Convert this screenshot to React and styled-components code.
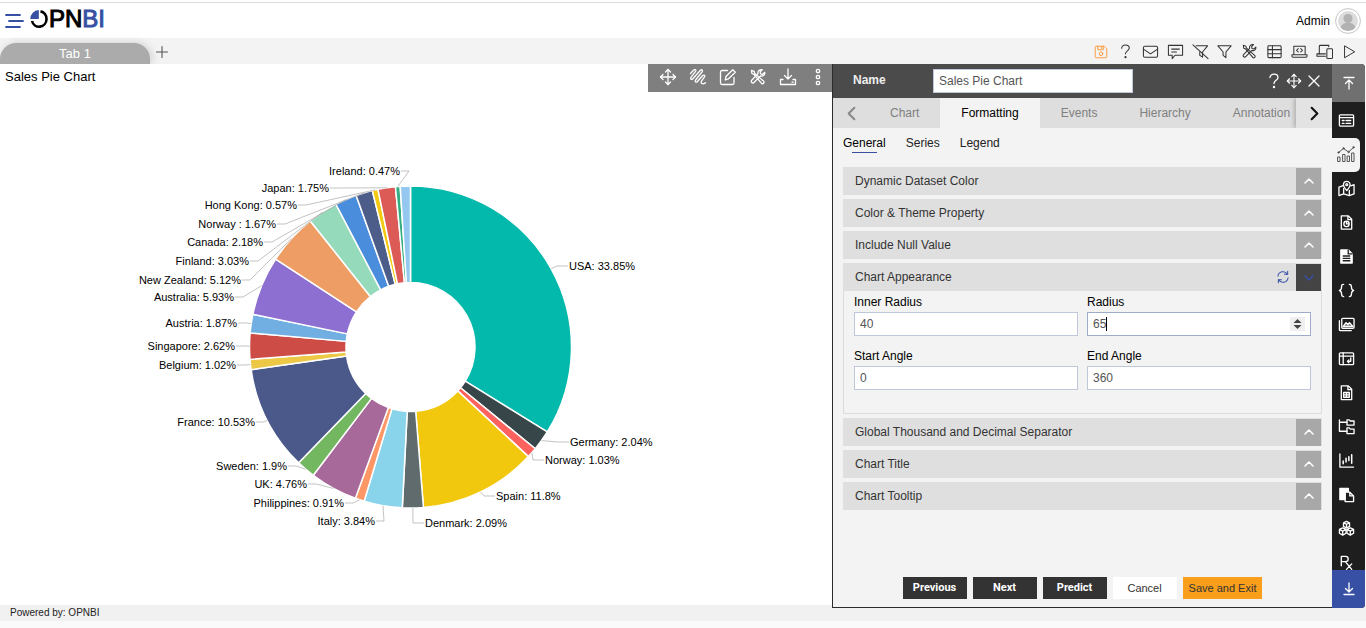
import React from "react";
import styled, { createGlobalStyle, css } from "styled-components";

const GlobalStyle = createGlobalStyle`
  *, *::before, *::after { box-sizing: border-box; }
  html, body { margin: 0; padding: 0; }
  body {
    background: #fafafa;
    color: #000;
    font-family: "Liberation Sans", Arial, sans-serif;
    font-size: 12px;
    overflow: hidden;
  }
  button, input { font-family: inherit; font-size: inherit; }
`;

/* ---------- icons ---------- */

const shapes = {
  save: (
    <>
      <path d="M2.5 3.5a1 1 0 0 1 1-1h9l3 3v9a1 1 0 0 1-1 1h-11a1 1 0 0 1-1-1z" />
      <path d="M5.5 2.5v4h6v-4M9.5 3v2" />
      <circle cx="9" cy="11" r="2" />
    </>
  ),
  help: (
    <>
      <path d="M5 5.600c0-2 1.600-3.400 4-3.400s4 1.300 4 3.200c0 2.900-4 2.900-4 6.100" />
      <circle cx="9" cy="15" r="0.600" fill="currentColor" />
    </>
  ),
  mail: (
    <>
      <rect x="1.500" y="3.500" width="15" height="11.500" rx="1.500" />
      <path d="M1.500 6.500l7.500 5 7.500-5" />
    </>
  ),
  comment: (
    <>
      <path d="M1.500 2.500h15v10.500H8.500L5.500 16.500v-3.500h-4z" />
      <path d="M5 6.500h8M5 9.500h5" />
    </>
  ),
  filterOff: (
    <>
      <path d="M4.500 3H16.500l-5.300 6.500v5.500l-3-2V9.500" />
      <path d="M1 2l16 14.500" />
    </>
  ),
  filter: <path d="M2 3h14l-5.500 6.500V15.500l-3-2.500V9.500z" />,
  tools: (
    <>
      <path d="M2.500 2.300l2.600 1 .7 2.100 8.900 7.900a1.500 1.500 0 0 1-2.100 2.100L4.900 6.300l-2-.8z" />
      <path d="M15.800 4.300l-2.200 2-2-.5-.4-2 2-2.100c-2.600-.6-4.700 1.300-4.100 3.900l-6.400 6.600a1.500 1.500 0 1 0 2.300 2.300l6.500-6.600c2.600.700 4.700-1.200 4.300-3.600z" />
    </>
  ),
  table: (
    <>
      <rect x="2" y="3" width="14" height="12.500" rx="1" />
      <path d="M2 7h14M2 11.300h14M6.800 3v12.500" />
    </>
  ),
  laptopCode: (
    <>
      <path d="M3 12V3.500h12V12" />
      <path d="M1 12.500h16v1.500a1 1 0 0 1-1 1H2a1 1 0 0 1-1-1z" />
      <path d="M7.700 6L5.900 7.700l1.800 1.800M10.300 6l1.800 1.700-1.800 1.800" />
    </>
  ),
  devices: (
    <>
      <path d="M3.500 11.500V3.500A1 1 0 0 1 4.500 2.500h9V4" />
      <path d="M10 11.500H1v2.500h9" />
      <rect x="11.500" y="6" width="6" height="10.500" rx="1" />
    </>
  ),
  play: <path d="M4 2.500v13l11-6.500z" />,
  move: (
    <>
      <path d="M9 1.500v15M1.500 9h15" />
      <path d="M6.500 4L9 1.500 11.500 4M6.500 14L9 16.500 11.500 14M4 6.500L1.500 9 4 11.500M14 6.500L16.500 9 14 11.500" />
    </>
  ),
  scribble: (
    <path d="M1.500 5.500l3-3.200c1.500-1.500 3.200-.2 1.900 1.400L2 9.300c-1.200 1.600.500 2.900 1.900 1.500l7.300-8.300c1.500-1.500 3.100-.3 1.900 1.300L6.600 12c-1.200 1.600.500 3 1.900 1.500l5-5.700c1.400-1.500 3.100-.2 1.900 1.400l-2.600 3.500c-1.700 2.400.600 4.500 3.700 2" />
  ),
  edit: (
    <>
      <path d="M8.500 2.500H3a1.500 1.500 0 0 0-1.500 1.500v11A1.500 1.500 0 0 0 3 16.500h10.500a1.500 1.500 0 0 0 1.500-1.500V9.500" />
      <path d="M7 8.500l6.700-6.800 2.600 2.600-6.800 6.500L6.300 12z" />
    </>
  ),
  download: (
    <>
      <path d="M9 1v9.500M5.500 7.500L9 11l3.500-3.500" />
      <path d="M4 11.500H1.500v5h15v-5H14M13 14.200h1.200" />
    </>
  ),
  dots: (
    <>
      <circle cx="9" cy="3" r="1.700" />
      <circle cx="9" cy="9" r="1.700" />
      <circle cx="9" cy="15" r="1.700" />
    </>
  ),
  close: <path d="M4 4l10 10M14 4L4 14" />,
  plus: <path d="M9 3.500v11M3.500 9h11" />,
  left: <path d="M12 3L6 9l6 6" />,
  right: <path d="M6 3l6 6-6 6" />,
  up: <path d="M5 10l4-4 4 4" />,
  down: <path d="M5 7l4 4 4-4" />,
  toTop: <path d="M4 3.500h10M9 15V6M5.500 9.500L9 6l3.500 3.500" />,
  toBottom: <path d="M4 14.500h10M9 3v9M5.500 8.500L9 12l3.500-3.500" />,
  refresh: (
    <>
      <path d="M2.500 8a6.500 6.500 0 0 1 12-2.700M15.500 10a6.500 6.500 0 0 1-12 2.700" />
      <path d="M15 1.500v4h-4M3 16.500v-4h4" />
    </>
  ),
  form: (
    <>
      <rect x="1.500" y="3" width="15" height="12" rx="1" />
      <path d="M2 6h14M4.500 9h2M8.500 9h5M4.500 12h2M8.500 12h5" />
    </>
  ),
  chart: (
    <>
      <path d="M1 12h2v4.500H1zM6 9.500h2v7H6zM10.500 11h2v5.500h-2zM15 8h2v8.500h-2z" />
      <path d="M1.500 7.500L6.500 3.500l5 3.500 5-4.500" />
      <circle cx="1.500" cy="7.500" r="0.700" />
      <circle cx="6.500" cy="3.300" r="0.700" />
      <circle cx="11.500" cy="7" r="0.700" />
      <circle cx="16.500" cy="2.300" r="0.700" />
    </>
  ),
  map: (
    <>
      <path d="M5.500 6L1 7.500v9L6 14.700l6 1.800 5-1.800V5l-3.500 1.200M6 9v5.700M12 11v5.500" />
      <path d="M9.300 11.300c-2-2.500-3.500-4.500-3.500-6.300a3.500 3.500 0 0 1 7 0c0 1.800-1.500 3.800-3.500 6.300z" />
      <circle cx="9.300" cy="5" r="1" />
    </>
  ),
  fileChart: (
    <>
      <path d="M3.500 2h7.500l3.500 3.500v10.500h-11zM10.500 2V6h4" />
      <circle cx="9" cy="10.500" r="2.800" />
      <path d="M9 8v2.500h2.500" />
    </>
  ),
  file: (
    <>
      <path fill="currentColor" d="M3 2h8l4 4v10H3z" />
      <path stroke="#1e1e1e" d="M10.800 2v4.300H15M5.500 8.500h7M5.500 11h7M5.500 13.500h7" />
    </>
  ),
  braces: (
    <path d="M6 2.500c-2 0-2.200.700-2.200 2.500 0 2-.1 3.500-2.300 4 2.200.500 2.300 2 2.300 4 0 1.800.2 2.500 2.200 2.500M12 2.500c2 0 2.200.700 2.200 2.500 0 2 .1 3.500 2.300 4-2.200.500-2.300 2-2.300 4 0 1.800-.2 2.500-2.200 2.500" />
  ),
  images: (
    <>
      <rect x="4" y="2.500" width="13" height="10.500" rx="1" />
      <path d="M1.500 5V14.500a1 1 0 0 0 1 1H14" />
      <path d="M5.500 11l3-4 2 2 1.700-2 3.500 4z" fill="currentColor" fillOpacity="0.400" />
    </>
  ),
  pivot: (
    <>
      <rect x="1.500" y="3" width="15" height="12.500" rx="1" />
      <path d="M2 6.500h14M5.500 3v12.500M13.500 8.500v3.500H10M11.500 10.500L10 12l1.500 1.500" />
    </>
  ),
  fileTable: (
    <>
      <path d="M3.500 2h7.500l3.500 3.500v11h-11zM10.500 2V6h4" />
      <path d="M6 9h6v5H6zM6 11.500h6M9 9v5" />
    </>
  ),
  tree: (
    <>
      <path d="M1.500 2v12h8M1.500 4.500h8" />
      <path d="M9.500 2h2.500l1 1.200h4V7.500H9.500zM9.500 10.500h2.500l1 1.200h4v4.800H9.500z" />
    </>
  ),
  candles: (
    <>
      <path d="M2 2v14h14.500" />
      <path d="M5.500 9.500v3M8.500 6.500v4M11.500 5v4M14.500 3v9" strokeWidth="1.600" />
    </>
  ),
  paste: (
    <>
      <path fill="currentColor" d="M2 2.500h9v3.500H7.500v8.500H2z" />
      <path d="M7.500 6.500h5L16.500 10.500v6h-9zM12.500 6.500v4h4" />
    </>
  ),
  cubes: (
    <>
      <path d="M9 1.500l3.200 1.500v3.800L9 8.500 5.800 6.800V3zM5.800 3L9 4.500 12.200 3M9 4.500v4" />
      <path d="M5 8.300l3.500 1.700v4L5 16 1.500 14v-4zM1.500 10L5 11.700 8.500 10M5 11.700V16" />
      <path d="M13 8.300l3.500 1.700v4L13 16l-3.500-2v-4zM9.500 10l3.500 1.700 3.500-1.700M13 11.700V16" />
    </>
  ),
  rx: <path d="M3.500 12.500v-10h4.500a2.800 2.800 0 0 1 0 5.600H3.500M8 8.300l6.500 8M14.500 10.500L9 16.300" />,
};

const Svg = styled.svg`
  display: block;
  flex: none;
  fill: none;
  stroke: currentColor;
  stroke-linecap: round;
  stroke-linejoin: round;
`;

function Icon({ name, size = 18, weight = 1.1 }) {
  return (
    <Svg width={size} height={size} viewBox="0 0 18 18" strokeWidth={weight} aria-hidden="true">
      {shapes[name]}
    </Svg>
  );
}

const IconButton = styled.button`
  display: flex;
  align-items: center;
  justify-content: center;
  flex: none;
  padding: 0;
  border: 0;
  background: transparent;
  color: ${(p) => p.$color || "inherit"};
  cursor: pointer;
`;

/* ---------- page frame ---------- */

const Page = styled.div`
  display: flex;
  flex-direction: column;
  height: 100vh;
  padding-bottom: 7px;
`;

const Header = styled.header`
  display: flex;
  align-items: center;
  justify-content: space-between;
  flex: none;
  height: 36px;
  margin-top: 2px;
  padding: 0 5px;
  border-top: 1px solid #dcdcdc;
  background: #fff;
  box-shadow: 0 -2px 0 #fff;
`;

const Brand = styled.div`
  display: flex;
  align-items: center;
  gap: 6px;
`;

const Logo = styled.a`
  display: flex;
  align-items: center;
  height: 32px;
  padding-bottom: 4px;
  color: #000;
  font-size: 24px;
  line-height: 28px;
  text-decoration: none;
`;

const LogoName = styled.span`
  padding-left: 1px;
  -webkit-text-stroke: 1px #000;
`;

const LogoAccent = styled.span`
  color: #3750a4;
  -webkit-text-stroke: 1px #3750a4;
`;

const User = styled.div`
  display: flex;
  align-items: center;
  gap: 5px;
`;

const TabBar = styled.div`
  display: flex;
  align-items: flex-end;
  justify-content: space-between;
  flex: none;
  height: 26px;
  padding-right: 9px;
  background: #f3f3f3;
`;

const Tabs = styled.div`
  display: flex;
  align-items: flex-end;
  gap: 3px;
`;

const PageTab = styled.button`
  width: 150px;
  height: 21px;
  padding: 0;
  border: 0;
  border-radius: 16px 16px 0 0;
  background: #ababab;
  box-shadow: 2px 0 8px rgba(0, 0, 0, 0.15);
  color: #fff;
  font-size: 13px;
  line-height: 21px;
`;

const AddTab = styled(IconButton)`
  height: 24px;
  color: #555;
`;

const PageTools = styled.div`
  display: flex;
  align-items: center;
  justify-content: space-between;
  width: 264px;
  height: 25px;
  color: #333;
`;

const Workspace = styled.main`
  display: flex;
  flex: 1;
  min-height: 0;
`;

const Footer = styled.footer`
  flex: none;
  height: 16px;
  padding-left: 10px;
  background: #f1f1f1;
  color: #222;
  font-size: 10px;
  line-height: 16px;
`;

/* ---------- chart widget ---------- */

const Widget = styled.section`
  display: flex;
  flex: 1;
  flex-direction: column;
  min-width: 0;
  background: #fff;
`;

const WidgetHeader = styled.div`
  display: flex;
  justify-content: space-between;
  flex: none;
  height: 28px;
`;

const WidgetTitle = styled.h1`
  margin: 0;
  padding-left: 5px;
  font-size: 13px;
  font-weight: 400;
  line-height: 25px;
`;

const WidgetTools = styled.div`
  display: flex;
  padding: 0 0 2px 5px;
  background: #7f7f7f;
  color: #fff;
`;

const WidgetTool = styled(IconButton)`
  width: 30px;
  height: 26px;
  &:last-child { width: 29px; }
`;

const ChartArea = styled.div`
  display: flex;
  align-items: center;
  justify-content: center;
  flex: 1;
  min-height: 0;
  padding: 0 12px 3px 0;
`;

const ChartLabel = styled.text`
  fill: #000;
  font-size: 11px;
`;

const slices = [
  { name: "USA", value: 33.85, color: "#03b9ac", x: 569, y: 266, side: 1 },
  { name: "Germany", value: 2.04, color: "#374649", x: 570, y: 442, side: 1 },
  { name: "Norway", value: 1.03, color: "#fd625e", x: 545, y: 460, side: 1 },
  { name: "Spain", value: 11.8, color: "#f2c80f", x: 496, y: 496, side: 1 },
  { name: "Denmark", value: 2.09, color: "#5f6b6d", x: 425, y: 523, side: 1 },
  { name: "Italy", value: 3.84, color: "#8ad4eb", x: 375, y: 521, side: -1 },
  { name: "Philippines", value: 0.91, color: "#fe9666", x: 344, y: 503, side: -1 },
  { name: "UK", value: 4.76, color: "#a66999", x: 307, y: 484, side: -1 },
  { name: "Sweden", value: 1.9, color: "#73b761", x: 287, y: 466, side: -1 },
  { name: "France", value: 10.53, color: "#4a588a", x: 255, y: 422, side: -1 },
  { name: "Belgium", value: 1.02, color: "#ecc846", x: 236, y: 365, side: -1 },
  { name: "Singapore", value: 2.62, color: "#cd4c46", x: 235, y: 346, side: -1 },
  { name: "Austria", value: 1.87, color: "#71afe2", x: 237, y: 323, side: -1 },
  { name: "Australia", value: 5.93, color: "#8d6fd1", x: 234, y: 297, side: -1 },
  { name: "New Zealand", value: 5.12, color: "#ee9e64", x: 241, y: 280, side: -1 },
  { name: "Finland", value: 3.03, color: "#95dabb", x: 249, y: 261, side: -1 },
  { name: "Canada", value: 2.18, color: "#4a8ddc", x: 263, y: 242, side: -1 },
  { name: "Norway ", value: 1.67, color: "#4c5d8a", x: 276, y: 224, side: -1 },
  { name: "Hong Kong", value: 0.57, color: "#f3c911", x: 297, y: 205, side: -1 },
  { name: "Japan", value: 1.75, color: "#dc5b57", x: 329, y: 188, side: -1 },
  { name: "Ireland", value: 0.47, color: "#33ae81", x: 400, y: 171, side: -1 },
  { name: "", value: 1.02, color: "#95c8f0" },
];

const CX = 410.5;
const CY = 347;
const OUTER = 161;
const INNER = 64.5;

const at = (share, r) => {
  const a = (share / 100) * Math.PI * 2;
  return [CX + r * Math.sin(a), CY - r * Math.cos(a)];
};

function DonutChart() {
  let total = 0;
  const parts = slices.map((s) => {
    const from = total;
    total += s.value;
    const [x1, y1] = at(from, OUTER);
    const [x2, y2] = at(total, OUTER);
    const [x3, y3] = at(total, INNER);
    const [x4, y4] = at(from, INNER);
    const [ex, ey] = at((from + total) / 2, OUTER);
    return {
      ...s,
      ex,
      ey,
      d: `M${x1} ${y1}A${OUTER} ${OUTER} 0 0 1 ${x2} ${y2}L${x3} ${y3}A${INNER} ${INNER} 0 0 0 ${x4} ${y4}Z`,
    };
  });
  const labelled = parts.filter((p) => p.name);
  return (
    <svg width="560" height="400" viewBox="130 147 560 400" role="img" aria-label="Sales by country">
      {parts.map((p, i) => (
        <path key={i} d={p.d} fill={p.color} stroke="#fff" strokeWidth="1.500" strokeLinejoin="round" />
      ))}
      {labelled.map((p) => (
        <polyline
          key={p.name}
          points={`${p.ex},${p.ey} ${p.x - p.side * (p.side > 0 ? 12 : 9)},${p.y} ${p.x - p.side},${p.y}`}
          fill="none"
          stroke="#888"
          strokeOpacity="0.500"
        />
      ))}
      {labelled.map((p) => (
        <ChartLabel key={p.name} x={p.x} y={p.y + 4} textAnchor={p.side > 0 ? "start" : "end"}>
          {`${p.name}: ${p.value}%`}
        </ChartLabel>
      ))}
    </svg>
  );
}

/* ---------- settings panel ---------- */

const Panel = styled.aside`
  position: relative;
  display: flex;
  flex-direction: column;
  flex: none;
  width: 500px;
  margin-bottom: -3px;
  border: solid #2b2b2b;
  border-width: 0 0 1px 1px;
  background: #f3f3f3;
`;

const PanelHeader = styled.div`
  display: flex;
  align-items: center;
  flex: none;
  height: 34px;
  padding: 0 9px 0 20px;
  background: #4b4b4b;
  color: #fff;
`;

const PanelTools = styled.div`
  display: flex;
  align-items: center;
  gap: 3px;
  margin-left: auto;
`;

const NameLabel = styled.label`
  width: 80px;
  padding-bottom: 3px;
  color: #eee;
  font-weight: 700;
`;

const TextInput = styled.input`
  display: block;
  width: ${(p) => p.$width || "100%"};
  height: 24px;
  padding: 0 5px;
  border: 1px solid ${(p) => (p.$active ? "#9fabcb" : "#bfc7da")};
  border-radius: 0;
  outline: 0;
  background: #fff;
  color: #555;
  font-size: 12px;
`;

const PanelTabs = styled.div`
  display: flex;
  flex: none;
  height: 30px;
  background: #dedede;
`;

const TabScroll = styled.div`
  display: flex;
  flex: 1;
  min-width: 0;
  overflow: hidden;
`;

const PanelTab = styled.button`
  flex: none;
  padding: 0 21px;
  border: 0;
  background: ${(p) => (p.$active ? "#f3f3f3" : "transparent")};
  color: ${(p) => (p.$active ? "#000" : "#808080")};
  line-height: 30px;
`;

const TabArrow = styled(IconButton)`
  width: 36px;
  ${(p) =>
    p.$raised &&
    css`
      background: #e3e3e3;
      box-shadow: -2px 0 4px rgba(0, 0, 0, 0.2);
      clip-path: inset(0 0 0 -8px);
    `}
`;

const SubTabs = styled.div`
  display: flex;
  flex: none;
  gap: 20px;
  padding: 8px 10px 14px;
`;

const SubTab = styled.button`
  display: flex;
  flex-direction: column;
  align-items: center;
  height: 17px;
  padding: 0;
  border: 0;
  background: transparent;
  color: ${(p) => (p.$active ? "#000" : "#222")};
  line-height: 14px;
  &::after {
    content: "";
    width: 25px;
    height: 1px;
    margin-top: 2px;
    background: ${(p) => (p.$active ? "#3750a4" : "transparent")};
  }
`;

const Accordion = styled.div`
  display: flex;
  flex-direction: column;
  flex: 1;
  gap: 4px;
  min-height: 0;
  padding: 0 10px;
`;

const Section = styled.section`
  flex: none;
`;

const SectionHeader = styled.div`
  display: flex;
  align-items: stretch;
  height: 28px;
  border: solid #dfdfdf;
  border-width: 1px 1px 0 0;
  background: #dfdfdf;
`;

const SectionTitle = styled.h2`
  flex: 1;
  margin: 0;
  padding-left: 12px;
  color: #333;
  font-size: 12px;
  font-weight: 400;
  line-height: 26px;
`;

const SectionToggle = styled(IconButton)`
  width: 25px;
  background: ${(p) => (p.$open ? "#444" : "#a8a8a8")};
  color: ${(p) => (p.$open ? "#3750a4" : "#fff")};
`;

const RefreshButton = styled(IconButton)`
  width: 26px;
  padding-bottom: 2px;
  color: #3750a4;
`;

const SectionBody = styled.div`
  display: grid;
  grid-template-columns: 1fr 1fr;
  gap: 13px 9px;
  padding: 4px 10px 23px;
  border: 1px solid #dcdcdc;
  border-top: 0;
`;

const Field = styled.label`
  display: flex;
  flex-direction: column;
  gap: 3px;
  line-height: 14px;
`;

const InputWrap = styled.span`
  position: relative;
  display: block;
`;

const Caret = styled.span`
  position: absolute;
  top: 5px;
  left: 19px;
  width: 1px;
  height: 14px;
  background: #000;
`;

const Spinner = styled.span`
  position: absolute;
  top: 5px;
  right: 6px;
  width: 15px;
  height: 14px;
  background: #efefef;
`;

const Actions = styled.div`
  display: flex;
  justify-content: center;
  flex: none;
  gap: 6px;
  padding-bottom: 8px;
`;

const tones = {
  dark: css`
    background: #333;
    color: #fff;
    font-family: Roboto, Arial, sans-serif;
    font-weight: 700;
  `,
  light: css`
    background: #fff;
    color: #333;
  `,
  accent: css`
    background: #f99f1b;
    color: #333;
  `,
};

const ActionButton = styled.button`
  min-width: 64px;
  height: 22px;
  padding: 0 6px;
  border: 0;
  font-size: 11px;
  line-height: 22px;
  ${(p) => tones[p.$tone]}
`;

/* ---------- right rail ---------- */

const Rail = styled.nav`
  position: relative;
  display: flex;
  flex-direction: column;
  flex: none;
  width: 33px;
  margin: 0 1px -3px 0;
  border-radius: 0 4px 4px 0;
  background: #1e1e1e;
  overflow: hidden;
`;

const RailEnd = styled(IconButton)`
  width: 33px;
  height: 38px;
  background: ${(p) => p.$bg};
  color: #fff;
`;

const RailList = styled.div`
  display: flex;
  flex: 1;
  flex-direction: column;
  min-height: 0;
  padding-top: 2px;
  overflow: hidden;
`;

const RailItem = styled(IconButton)`
  width: 28px;
  height: 34px;
  padding-bottom: 2px;
  border-radius: 0 5px 5px 0;
  background: ${(p) => (p.$active ? "#f3f3f3" : "transparent")};
  color: ${(p) => (p.$active ? "#555" : "#fff")};
`;

const pageTools = [
  ["save", "Save"],
  ["help", "Help"],
  ["mail", "Mail"],
  ["comment", "Comments"],
  ["filterOff", "Clear filters"],
  ["filter", "Filters"],
  ["tools", "Settings"],
  ["table", "Data"],
  ["laptopCode", "Code"],
  ["devices", "Devices"],
  ["play", "Preview"],
];

const widgetTools = ["move", "scribble", "edit", "tools", "download", "dots"];

const railItems = [
  "form", "chart", "map", "fileChart", "file", "braces", "images",
  "pivot", "fileTable", "tree", "candles", "paste", "cubes", "rx",
];

function AccordionItem({ title, open, children }) {
  return (
    <Section>
      <SectionHeader>
        <SectionTitle>{title}</SectionTitle>
        {open && (
          <RefreshButton aria-label="Reset">
            <Icon name="refresh" size={14} weight={1.3} />
          </RefreshButton>
        )}
        <SectionToggle $open={open} aria-expanded={!!open} aria-label={title}>
          <Icon name={open ? "down" : "up"} size={18} weight={1.5} />
        </SectionToggle>
      </SectionHeader>
      {open && <SectionBody>{children}</SectionBody>}
    </Section>
  );
}

function NumberField({ label, value, active }) {
  return (
    <Field>
      {label}
      <InputWrap>
        <TextInput defaultValue={value} inputMode="numeric" $active={active} />
        {active && (
          <>
            <Caret />
            <Spinner>
              <svg width="15" height="14" viewBox="0 0 15 14" aria-hidden="true">
                <path d="M3.500 6L7.500 2l4 4zM3.500 8l4 4 4-4z" fill="#444" />
              </svg>
            </Spinner>
          </>
        )}
      </InputWrap>
    </Field>
  );
}

export default function App() {
  return (
    <Page>
      <GlobalStyle />
      <Header>
        <Brand>
          <IconButton $color="#3750a4" aria-label="Menu">
            <svg width="19" height="18" viewBox="0 0 19 18" aria-hidden="true">
              <path
                d="M1 3h14M4 9h14M1 15h14"
                fill="none"
                stroke="currentColor"
                strokeWidth="1.800"
                strokeLinecap="round"
              />
            </svg>
          </IconButton>
          <Logo href="#" aria-label="OPNBI home">
            <svg width="18" height="20" viewBox="0 0 18 20" aria-hidden="true">
              <path d="M8.800 1V10H.3A8.600 9 0 0 1 8.800 1z" fill="#3750a4" />
              <path d="M10.500 2.400A7.400 7.700 0 1 1 2 12" fill="none" stroke="#000" strokeWidth="2.600" />
            </svg>
            <LogoName>PN</LogoName>
            <LogoAccent>BI</LogoAccent>
          </Logo>
        </Brand>
        <User>
          Admin
          <svg width="26" height="26" viewBox="0 0 26 26" role="img" aria-label="Admin avatar">
            <circle cx="13" cy="13" r="12.400" fill="#fff" stroke="#c4c4c4" />
            <circle cx="13" cy="13" r="10" fill="#dcdcdc" />
            <circle cx="13" cy="10.500" r="4.500" fill="#b2b2b2" />
            <path d="M5.800 20a7.200 5.500 0 0 1 14.400 0 10 10 0 0 1-14.400 0z" fill="#b2b2b2" />
          </svg>
        </User>
      </Header>

      <TabBar>
        <Tabs>
          <PageTab>Tab 1</PageTab>
          <AddTab aria-label="Add tab">
            <Icon name="plus" />
          </AddTab>
        </Tabs>
        <PageTools>
          {pageTools.map(([name, label]) => (
            <IconButton key={name} aria-label={label} $color={name === "save" ? "#ff9a3c" : undefined}>
              <Icon name={name} size={name === "play" || name === "save" ? 16 : 17} />
            </IconButton>
          ))}
        </PageTools>
      </TabBar>

      <Workspace>
        <Widget>
          <WidgetHeader>
            <WidgetTitle>Sales Pie Chart</WidgetTitle>
            <WidgetTools>
              {widgetTools.map((name) => (
                <WidgetTool key={name} aria-label={name}>
                  <Icon name={name} weight={1.3} />
                </WidgetTool>
              ))}
            </WidgetTools>
          </WidgetHeader>
          <ChartArea>
            <DonutChart />
          </ChartArea>
        </Widget>

        <Panel>
          <PanelHeader>
            <NameLabel htmlFor="widget-name">Name</NameLabel>
            <TextInput id="widget-name" $width="200px" defaultValue="Sales Pie Chart" />
            <PanelTools>
              <IconButton aria-label="Help"><Icon name="help" weight={1.3} /></IconButton>
              <IconButton aria-label="Move"><Icon name="move" size={16} weight={1.3} /></IconButton>
              <IconButton aria-label="Close"><Icon name="close" weight={1.3} /></IconButton>
            </PanelTools>
          </PanelHeader>

          <PanelTabs>
            <TabArrow $color="#888" aria-label="Previous tabs">
              <Icon name="left" size={17} weight={2.2} />
            </TabArrow>
            <TabScroll>
              {["Chart", "Formatting", "Events", "Hierarchy", "Annotation"].map((t) => (
                <PanelTab key={t} $active={t === "Formatting"}>{t}</PanelTab>
              ))}
            </TabScroll>
            <TabArrow $raised $color="#111" aria-label="Next tabs">
              <Icon name="right" size={17} weight={2.2} />
            </TabArrow>
          </PanelTabs>

          <SubTabs>
            <SubTab $active>General</SubTab>
            <SubTab>Series</SubTab>
            <SubTab>Legend</SubTab>
          </SubTabs>

          <Accordion>
            <AccordionItem title="Dynamic Dataset Color" />
            <AccordionItem title="Color & Theme Property" />
            <AccordionItem title="Include Null Value" />
            <AccordionItem title="Chart Appearance" open>
              <NumberField label="Inner Radius" value="40" />
              <NumberField label="Radius" value="65" active />
              <NumberField label="Start Angle" value="0" />
              <NumberField label="End Angle" value="360" />
            </AccordionItem>
            <AccordionItem title="Global Thousand and Decimal Separator" />
            <AccordionItem title="Chart Title" />
            <AccordionItem title="Chart Tooltip" />
          </Accordion>

          <Actions>
            <ActionButton $tone="dark">Previous</ActionButton>
            <ActionButton $tone="dark">Next</ActionButton>
            <ActionButton $tone="dark">Predict</ActionButton>
            <ActionButton $tone="light">Cancel</ActionButton>
            <ActionButton $tone="accent">Save and Exit</ActionButton>
          </Actions>
        </Panel>

        <Rail>
          <RailEnd $bg="#707070" aria-label="Scroll to top">
            <Icon name="toTop" weight={1.3} />
          </RailEnd>
          <RailList>
            {railItems.map((name) => (
              <RailItem key={name} $active={name === "chart"} aria-label={name}>
                <Icon name={name} size={name === "chart" ? 18 : 17} weight={name === "chart" ? 1 : 1.4} />
              </RailItem>
            ))}
          </RailList>
          <RailEnd $bg="#3750a4" aria-label="Scroll to bottom">
            <Icon name="toBottom" weight={1.3} />
          </RailEnd>
        </Rail>
      </Workspace>
      <Footer>Powered by: OPNBI</Footer>
    </Page>
  );
}
